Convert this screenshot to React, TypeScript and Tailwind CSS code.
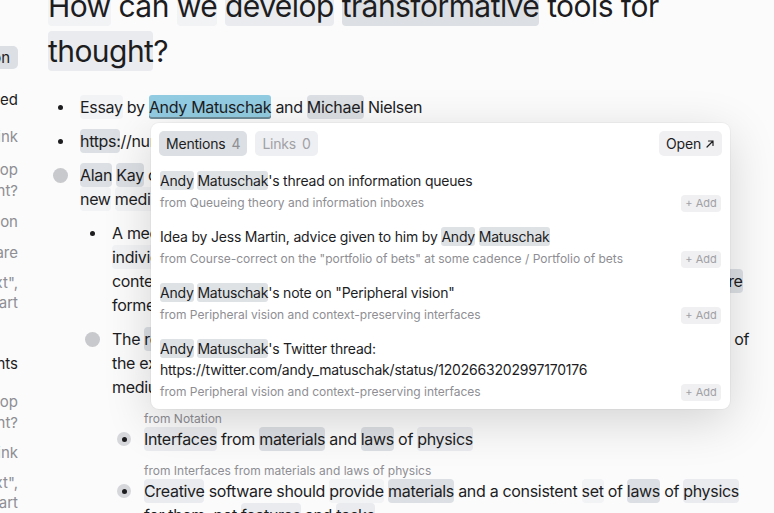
import React from 'react';

type Tone = 'faint' | 'light' | 'mid';

const tone: Record<Tone, string> = {
    faint: 'bg-[#f2f3f5]',
    light: 'bg-[#e9ebee]',
    mid: 'bg-[#dcdfe3]',
};

// highlighted word in the note body
const W: React.FC<{ t?: Tone; children: React.ReactNode }> = ({ t = 'mid', children }) => (
    <span className={`${tone[t]} rounded-[4px] py-[2px]`}>{children}</span>
);

// highlighted word in the popover
const P: React.FC<{ children: React.ReactNode }> = ({ children }) => (
    <span className="bg-[#dfe2e5] rounded-[3px] py-[1px]">{children}</span>
);

const Dot = () => (
    <span className="flex h-6 w-6 shrink-0 items-center justify-center">
        <span className="size-[5px] rounded-full bg-[#1d1d1f]" />
    </span>
);

const Collapsed = () => (
    <span className="flex h-6 w-6 shrink-0 items-center justify-center">
        <span className="size-[15px] rounded-full bg-[#c8c9cc]" />
    </span>
);

const Transcluded = () => (
    <span className="flex h-6 w-6 shrink-0 items-center justify-center">
        <span className="flex size-[14px] items-center justify-center rounded-full bg-[#d6d7da]">
            <span className="size-[5px] rounded-full bg-[#1d1d1f]" />
        </span>
    </span>
);

const Sidebar = () => (
    <aside className="flex w-[18px] shrink-0 flex-col items-end overflow-hidden whitespace-nowrap text-right text-[15px] leading-[21px] text-[#8e8e93]">
        <div className="mt-[46px] flex h-[27px] items-center rounded-[5px] bg-[#dcdfe3] pl-2 pr-[8px] text-[#1d1d1f]">Back to Notation</div>
        <div className="mt-[20px] text-[#1d1d1f]">Recently viewed</div>
        <div className="mt-[16px]">Notes should help you think</div>
        <div className="mt-[12px]">How can we develop<br />tools that are transparent?</div>
        <div className="mt-[10px]">Notation</div>
        <div className="mt-[10px]">Creative software</div>
        <div className="mt-[10px] leading-[20px]">"Peripheral vision" and "context",<br />a mental model you can see part</div>
        <div className="mt-[40px] text-[#1d1d1f]">Table of contents</div>
        <div className="mt-[17px]">How can we develop<br />tools that are transparent?</div>
        <div className="mt-[9px]">Notes should help you think</div>
        <div className="mt-[10px] leading-[20px]">"Peripheral vision" and "context",<br />a mental model you can see part</div>
    </aside>
);

const Note = () => (
    <main className="-mt-[16px] flex-1 pl-[30px] whitespace-nowrap">
        <h1 className="text-[30px] font-normal leading-[45px] tracking-[-0.56px]">
            <W t="faint">How</W> can <W t="faint">we</W> <W t="light">develop</W> <W>transformative</W> tools for
            <br />
            <W t="light">thought</W>?
        </h1>

        <ul className="mt-[16px] text-[16px] leading-[24px] tracking-[-0.32px]">
            <li className="flex gap-2 py-[5px]">
                <Dot />
                <div>
                    <W t="faint">Essay</W> by{' '}
                    <span className="rounded-[3px] bg-[#92cce3] py-[2px] shadow-[inset_0_-2px_0_#6f8c98]">Andy Matuschak</span> and{' '}
                    <W>Michael</W> Nielsen
                </div>
            </li>
            <li className="flex gap-2 py-[5px]">
                <Dot />
                <div>
                    <W>https:</W>//numinous.productions/ttft/
                </div>
            </li>
            <li className="py-[5px]">
                <div className="flex gap-2">
                    <Collapsed />
                    <div>
                        <W>Alan</W> <W>Kay</W> described the computer as the first metamedium, a
                        <br />
                        <W t="faint">new</W> <W t="faint">medium</W> for representing ideas.
                    </div>
                </div>
                <ul className="pl-8">
                    <li className="flex gap-2 pt-[10px] pb-[5px]">
                        <Dot />
                        <div>
                            A medium shapes the thoughts which can be thought by the
                            <br />
                            <W t="faint">individuals</W> who use it: it gives them new ideas to work with,
                            <br />
                            contexts in which to use them, and a way to see how all of them fit together, and <W>where</W>
                            <br />
                            formerly unthinkable thoughts become natural.
                        </div>
                    </li>
                    <li className="pt-[5px]">
                        <div className="flex gap-2">
                            <Collapsed />
                            <div>
                                The <W>representations</W> we use to think with have a larger effect on the kinds of <W>thoughts</W> of
                                <br />
                                the expressive ideas a notation allows, not just the
                                <br />
                                medium in which they happen to be written down.
                            </div>
                        </div>
                        <ul className="pl-8">
                            <li className="pt-[12px]">
                                <div className="ml-8 text-[12px] leading-[16px] tracking-normal text-[#8e8e93]">from Notation</div>
                                <div className="flex gap-2">
                                    <Transcluded />
                                    <div>
                                        <W t="light">Interfaces</W> from <W>materials</W> and <W>laws</W> of <W t="light">physics</W>
                                    </div>
                                </div>
                            </li>
                            <li className="pt-[12px]">
                                <div className="ml-8 text-[12px] leading-[16px] tracking-normal text-[#8e8e93]">from Interfaces from materials and laws of physics</div>
                                <div className="flex gap-2">
                                    <Transcluded />
                                    <div>
                                        <W t="light">Creative</W> software should <W t="faint">provide</W> <W>materials</W> and a consistent <W t="faint">set</W> of <W>laws</W> of <W t="light">physics</W>
                                        <br />
                                        for them, not <W t="light">features</W> and <W t="light">tasks</W>.
                                    </div>
                                </div>
                            </li>
                        </ul>
                    </li>
                </ul>
            </li>
        </ul>
    </main>
);

const mentions: { title: React.ReactNode; from: string }[] = [
    {
        title: <><P>Andy</P> <P>Matuschak</P>'s thread on information queues</>,
        from: 'from Queueing theory and information inboxes',
    },
    {
        title: <>Idea by Jess Martin, advice given to him by <P>Andy</P> <P>Matuschak</P></>,
        from: 'from Course-correct on the "portfolio of bets" at some cadence / Portfolio of bets',
    },
    {
        title: <><P>Andy</P> <P>Matuschak</P>'s note on "Peripheral vision"</>,
        from: 'from Peripheral vision and context-preserving interfaces',
    },
    {
        title: <><P>Andy</P> <P>Matuschak</P>'s Twitter thread: https://twitter.com/andy_matuschak/status/1202663202997170176</>,
        from: 'from Peripheral vision and context-preserving interfaces',
    },
];

const Popover = () => (
    <div className="absolute left-[151px] top-[123px] w-[579px] rounded-[8px] bg-white px-2 pt-2 pb-px shadow-[0_12px_48px_rgba(0,0,0,0.16),0_0_0_1px_rgba(0,0,0,0.03)]">
        <div className="flex h-[25px] items-center gap-2 text-[14px] tracking-[-0.2px]">
            <button className="flex h-[25px] items-center gap-[6px] rounded-[5px] bg-[#dcdfe3] px-[7px] text-[#1d1d1f]">
                Mentions <span className="text-[#8e8e93]">4</span>
            </button>
            <button className="flex h-[25px] items-center gap-[6px] rounded-[5px] bg-[#eeeff2] px-[7px] text-[#a1a1a6]">
                Links <span>0</span>
            </button>
            <button className="ml-auto flex h-[25px] items-center gap-[4px] rounded-[5px] bg-[#f0f0f3] px-[7px] text-[#1d1d1f]">
                Open
                <svg width="10" height="10" viewBox="0 0 10 10" fill="none" stroke="#1d1d1f" strokeWidth="1.2" strokeLinecap="round" strokeLinejoin="round">
                    <path d="M2 8L8 2M3.5 2H8V6.5" />
                </svg>
            </button>
        </div>
        <div className="mt-[7px] flex flex-col">
            {mentions.map((m, i) => (
                <div key={i} className="flex items-end gap-3 py-[7px]">
                    <div className="min-w-0 flex-1 pl-px">
                        <p className="text-[14px] leading-[21px] tracking-[-0.2px] text-[#1d1d1f]">{m.title}</p>
                        <p className="mt-[3px] text-[12px] leading-[18px] text-[#8e8e93]">{m.from}</p>
                    </div>
                    <button className="mr-px flex h-[17px] w-10 shrink-0 items-center justify-center rounded-[4px] bg-[#f0f0f2] text-[11px] text-[#a1a1a6]">
                        + Add
                    </button>
                </div>
            ))}
        </div>
    </div>
);

export default function App() {
    return (
        <div className="relative flex h-[513px] w-[774px] overflow-hidden bg-[#fbfbfc] font-[Inter,sans-serif] text-[#1d1d1f] antialiased">
            <Sidebar />
            <Note />
            <Popover />
        </div>
    );
}
